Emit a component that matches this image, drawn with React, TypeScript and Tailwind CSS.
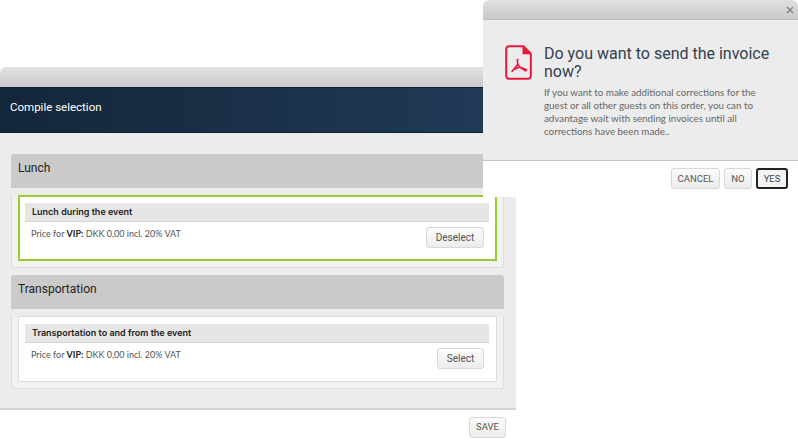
import { X } from "lucide-react";

const btn =
  "rounded-[3px] border border-[#d8d8d8] bg-gradient-to-b from-[#fbfbfb] to-[#ececec] text-[#555] [font-family:Roboto,sans-serif]";

function Option({
  title,
  action,
  selected,
  actionWidth,
}: {
  title: string;
  action: string;
  selected?: boolean;
  actionWidth: string;
}) {
  return (
    <div
      className={
        selected
          ? "mx-[6px] mt-[7px] h-[66px] border-2 border-[#9c3] bg-white pl-[5px] pr-[6px] pt-[6px]"
          : "mx-[6px] mt-[7px] h-[66px] border border-[#ddd] bg-white pl-[6px] pr-[7px] pt-[7px]"
      }
    >
      <div className="flex h-[19px] items-center border-b border-[#d6d6d6] bg-[#e6e6e6] pl-[7px] text-[9px] font-semibold text-[#222]">
        {title}
      </div>
      <div className="flex items-start justify-between pl-[6px] pr-[5px] pt-[5px]">
        <p className="text-[9px] text-[#555] [font-family:Lato,sans-serif]">
          Price for <b className="font-bold text-[#222]">VIP:</b> DKK 0,00 incl. 20% VAT
        </p>
        <button className={`${btn} ${actionWidth} h-[21px] text-[10px]`}>{action}</button>
      </div>
    </div>
  );
}

function Section({ heading, children }: { heading: string; children: React.ReactNode }) {
  return (
    <section>
      <h2 className="flex h-[34px] items-center rounded-t-[3px] bg-[#cacaca] pb-[6px] pl-[7px] text-[12px] text-[#222] [font-family:Roboto,sans-serif]">
        {heading}
      </h2>
      <div className="rounded-b-[3px] border-x border-b border-[#ddd] bg-[#f2f2f2] pb-[6px]">{children}</div>
    </section>
  );
}

export default function App() {
  return (
    <div className="relative h-[444px] w-[798px] overflow-hidden bg-white [font-family:Inter,sans-serif]">
      {/* back window */}
      <div className="absolute left-0 top-[67px] w-[516px]">
        <div className="h-[20px] rounded-tl-[6px] bg-gradient-to-b from-[#e2e2e2] to-[#c9c9c9]" />
        <div className="flex h-[46px] items-center border-y border-[#10202f] bg-gradient-to-r from-[#14263a] to-[#213c58] pb-[5px] pl-[10px] text-[11.5px] text-white [font-family:Roboto,sans-serif]">
          Compile selection
        </div>
        <div className="flex h-[277px] flex-col gap-[7px] border-b-2 border-[#d2d2d2] bg-[#ececec] pl-[11px] pr-[12px] pt-[21px]">
          <Section heading="Lunch">
            <Option title="Lunch during the event" action="Deselect" actionWidth="w-[58px]" selected />
          </Section>
          <Section heading="Transportation">
            <Option title="Transportation to and from the event" action="Select" actionWidth="w-[47px]" />
          </Section>
        </div>
        <div className="flex justify-end pr-[10px] pt-[7px]">
          <button className={`${btn} h-[21px] w-[37px] text-[9.5px]`}>SAVE</button>
        </div>
      </div>

      {/* front dialog */}
      <div className="absolute left-[483px] top-0 h-[197px] w-[315px] bg-white">
        <div className="flex h-[20px] items-center justify-end rounded-t-[6px] border-b border-[#bdbdbd] bg-gradient-to-b from-[#e0e0e0] to-[#c9c9c9] pr-[3px]">
          <X size={10} strokeWidth={4} className="text-[#888]" />
        </div>
        <div className="flex h-[141px] gap-[12px] border-b border-[#c4c4c4] bg-[#ececec] pl-[22px] pr-[20px] pt-[25px]">
          <svg width="27" height="35" viewBox="0 0 27 35" className="shrink-0" fill="none">
            <path d="M4 1.2h14.5l7.3 7.5V31a3 3 0 0 1-3 2.8H4A3 3 0 0 1 1.2 31V4A3 3 0 0 1 4 1.2z" stroke="#e6183f" strokeWidth="2" />
            <path d="M17.5 1.5v7.8h8z" fill="#e6183f" />
            <path d="M13 14.5c-1 0-1 2 0 4.5l-6 7.5M13 19l1.5 3L21 24.5c1 .5 0 1.5-1 1L14.5 22 8 25" stroke="#e6183f" strokeWidth="1.6" strokeLinecap="round" strokeLinejoin="round" />
          </svg>
          <div>
            <h1 className="text-[16px] leading-[18px] text-[#32404f] [font-family:Roboto,sans-serif]">
              Do you want to send the invoice now?
            </h1>
            <p className="mt-[5px] max-w-[222px] text-[9.8px] leading-[13px] text-[#666] [font-family:Lato,sans-serif]">
              If you want to make additional corrections for the guest or all other guests on this order, you can to advantage wait with sending invoices until all corrections have been made..
            </p>
          </div>
        </div>
        <div className="flex justify-end gap-[4px] pr-[10px] pt-[7px]">
          <button className={`${btn} h-[21px] w-[49px] pt-px text-[9.5px]`}>CANCEL</button>
          <button className={`${btn} h-[21px] w-[28px] pt-px text-[9.5px]`}>NO</button>
          <button className="h-[21px] w-[32px] rounded-[3px] border-2 border-[#222] bg-[#f4f4f4] pt-px text-[9.5px] text-[#444] [font-family:Roboto,sans-serif]">
            YES
          </button>
        </div>
      </div>
    </div>
  );
}
